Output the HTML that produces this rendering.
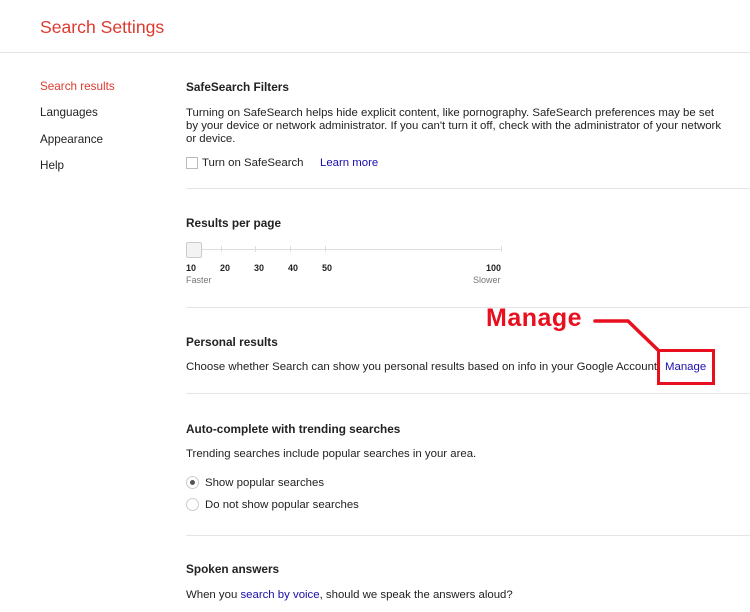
<!DOCTYPE html>
<html><head><style>
body{margin:0;width:750px;height:612px;background:#fff;font-family:"Liberation Sans",Arial,sans-serif;color:#222;position:relative;overflow:hidden}
.a{position:absolute;white-space:nowrap}
.t{font-size:11.4px;color:#222}
.h{font-size:11.8px;font-weight:bold;color:#222}
.hr{position:absolute;left:186px;right:0;height:1px;background:#e5e5e5}
.lk{color:#1a0dab}
</style></head><body>
<div class="a" style="left:40px;top:17px;font-size:17.6px;color:#dd3a2f">Search Settings</div>
<div style="position:absolute;left:0;right:0;top:52px;height:1px;background:#e5e5e5"></div>
<div class="a t" style="left:40px;top:80px;color:#dd3a2f;font-size:11.7px">Search results</div>
<div class="a t" style="left:40px;top:106px;font-size:11.7px">Languages</div>
<div class="a t" style="left:40px;top:133px;font-size:11.7px">Appearance</div>
<div class="a t" style="left:40px;top:159px;font-size:11.7px">Help</div>

<div class="a h" style="left:186px;top:80px">SafeSearch Filters</div>
<div class="a t" style="left:186px;top:107px;white-space:normal;width:538px;line-height:13px">Turning on SafeSearch helps hide explicit content, like pornography. SafeSearch preferences may be set by your device or network administrator. If you can't turn it off, check with the administrator of your network or device.</div>
<div class="a" style="left:186px;top:157px;width:10px;height:10px;border:1px solid #bbb"></div>
<div class="a t" style="left:202px;top:157px">Turn on SafeSearch</div>
<div class="a t lk" style="left:320px;top:157px">Learn more</div>
<div class="hr" style="top:188px"></div>

<div class="a h" style="left:186px;top:216px">Results per page</div>
<div class="a" style="left:190px;top:249px;width:312px;height:1px;background:#ddd"></div>
<div class="a" style="left:221px;top:246px;width:1px;height:6px;background:#ddd"></div>
<div class="a" style="left:255px;top:246px;width:1px;height:6px;background:#ddd"></div>
<div class="a" style="left:290px;top:246px;width:1px;height:6px;background:#ddd"></div>
<div class="a" style="left:325px;top:246px;width:1px;height:6px;background:#ddd"></div>
<div class="a" style="left:501px;top:246px;width:1px;height:6px;background:#ddd"></div>
<div class="a" style="left:186px;top:242px;width:14px;height:14px;border:1px solid #ccc;border-radius:2px;background:#f3f3f3"></div>
<div class="a" style="left:186px;top:263px;font-size:9px;font-weight:bold">10</div>
<div class="a" style="left:220px;top:263px;font-size:9px;font-weight:bold">20</div>
<div class="a" style="left:254px;top:263px;font-size:9px;font-weight:bold">30</div>
<div class="a" style="left:288px;top:263px;font-size:9px;font-weight:bold">40</div>
<div class="a" style="left:322px;top:263px;font-size:9px;font-weight:bold">50</div>
<div class="a" style="left:486px;top:263px;font-size:9px;font-weight:bold">100</div>
<div class="a" style="left:186px;top:275px;font-size:9px;color:#777">Faster</div>
<div class="a" style="left:473px;top:275px;font-size:9px;color:#777">Slower</div>
<div class="hr" style="top:307px"></div>

<div class="a h" style="left:186px;top:335px">Personal results</div>
<div class="a t" style="left:186px;top:361px">Choose whether Search can show you personal results based on info in your Google Account</div>
<div class="a" style="left:657px;top:349px;width:52px;height:30px;border:3px solid #e8101e;background:#fff"></div>
<div class="a t lk" style="left:665px;top:361px">Manage</div>
<div class="a" style="left:486px;top:304px;font-size:25px;font-weight:bold;color:#e8101e;letter-spacing:0.5px">Manage</div>
<svg class="a" style="left:0;top:0" width="750" height="612"><polyline points="595,321 628,321 658,350" fill="none" stroke="#e8101e" stroke-width="3.5" stroke-linecap="round"/></svg>
<div class="hr" style="top:393px"></div>

<div class="a h" style="left:186px;top:422px">Auto-complete with trending searches</div>
<div class="a t" style="left:186px;top:448px">Trending searches include popular searches in your area.</div>
<div class="a" style="left:186px;top:476px;width:11px;height:11px;border:1px solid #ccc;border-radius:50%"></div>
<div class="a" style="left:190px;top:480px;width:5px;height:5px;background:#555;border-radius:50%"></div>
<div class="a t" style="left:205px;top:477px">Show popular searches</div>
<div class="a" style="left:186px;top:498px;width:11px;height:11px;border:1px solid #ccc;border-radius:50%"></div>
<div class="a t" style="left:205px;top:499px">Do not show popular searches</div>
<div class="hr" style="top:535px"></div>

<div class="a h" style="left:186px;top:562px">Spoken answers</div>
<div class="a t" style="left:186px;top:589px">When you <span class="lk">search by voice</span>, should we speak the answers aloud?</div>
</body></html>
